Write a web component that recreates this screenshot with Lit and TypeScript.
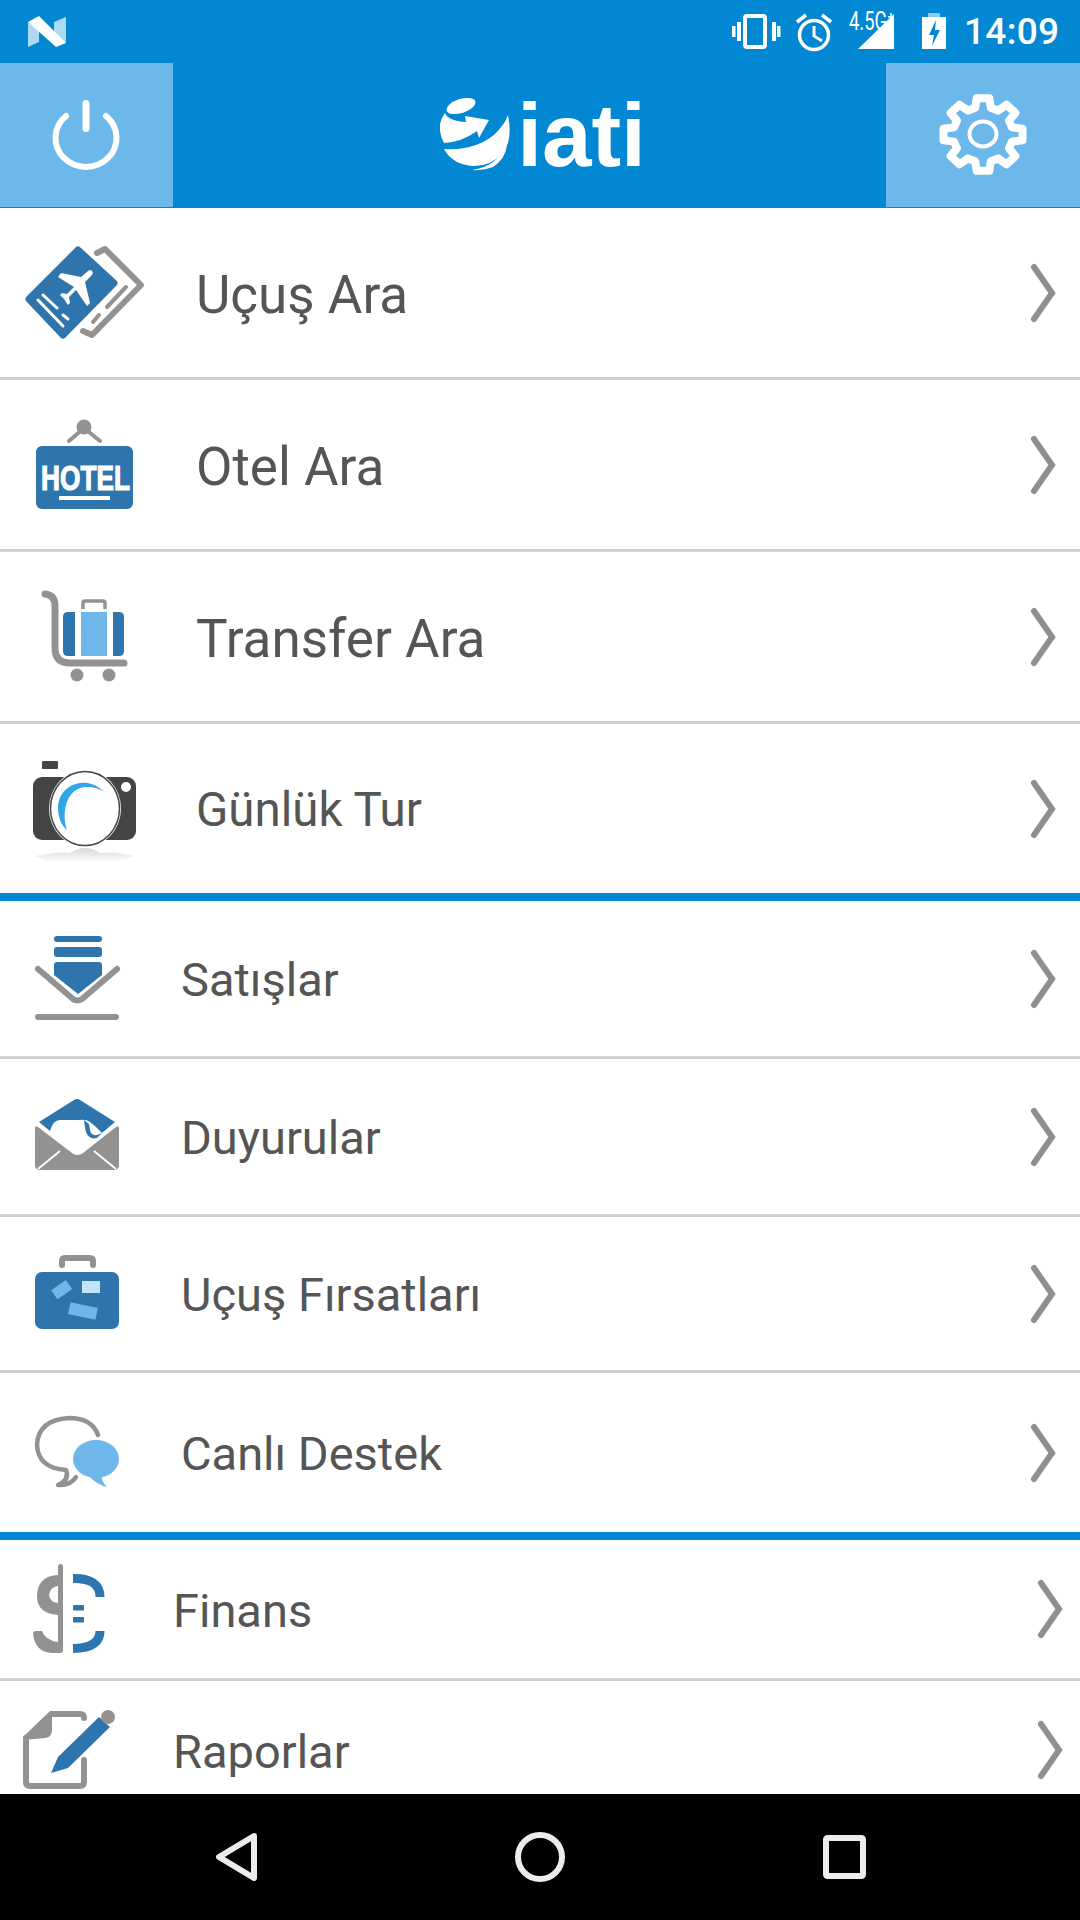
import { LitElement, html, css, svg } from 'lit'
import { customElement } from 'lit/decorators.js'

const BLUE = '#2e75ad'
const GRAY = '#929292'
const LIGHT = '#6db7ea'

// icons are authored in page coordinates, each row's viewBox crops to its own band
const ticket = svg`
  <path d="M78 250 L114 283 L63 335 L29 299Z" fill=${BLUE} stroke=${BLUE} stroke-width="7" stroke-linejoin="round"/>
  <path d="M97 253 L105 249 L141 285 L92 335 L83 331" fill="none" stroke=${GRAY} stroke-width="6" stroke-linejoin="round" stroke-linecap="round"/>
  <path d="M107 307 L126 287 M93 322 L99 315" stroke=${GRAY} stroke-width="4" stroke-linecap="round"/>
  <path d="M38 300 L63 326 M43 295 L57 308 M63 315 L68 319" stroke="#fff" stroke-width="3" stroke-linecap="round"/>
  <path d="M92 271 Q94 273 91 276 L85 282 L90 303 L87 306 L76 290 L69 297 L70 303 L68 305 L64 299 L60 295 L62 293 L67 294 L74 287 L58 277 L61 273 L81 277 L88 271 Q90 269 92 271Z" fill="#fff"/>
`

const hotel = svg`
  <circle cx="84" cy="427" r="7.5" fill=${GRAY}/>
  <path d="M69 441 L84 428 L100 441" fill="none" stroke=${GRAY} stroke-width="4" stroke-linecap="round"/>
  <rect x="36" y="446" width="97" height="63" rx="6" fill=${BLUE}/>
  <text x="41" y="490" textLength="89" lengthAdjust="spacingAndGlyphs" font-family="Liberation Sans" font-weight="700" font-size="35" fill="#fff" stroke="#fff" stroke-width="1.2">HOTEL</text>
  <rect x="59" y="496" width="51" height="4" fill="#fff"/>
`

const cart = svg`
  <path d="M45 594 Q55 595 55 606 L55 648 Q55 663 70 663 L124 663" fill="none" stroke=${GRAY} stroke-width="7" stroke-linecap="round"/>
  <circle cx="77" cy="675" r="6.5" fill=${GRAY}/>
  <circle cx="109" cy="675" r="6.5" fill=${GRAY}/>
  <path d="M83 609 L83 603 Q83 601 85 601 L103 601 Q105 601 105 603 L105 609" fill="none" stroke=${GRAY} stroke-width="3.5"/>
  <path d="M75 612 L75 656 L68 656 Q63 656 63 651 L63 617 Q63 612 68 612Z" fill=${BLUE}/>
  <rect x="81" y="612" width="26" height="44" fill=${LIGHT}/>
  <path d="M113 612 L113 656 L119 656 Q124 656 124 651 L124 617 Q124 612 119 612Z" fill=${BLUE}/>
`

const camera = svg`
  <defs>
    <linearGradient id="shine" x1="0" y1="0" x2="0" y2="1">
      <stop offset="0" stop-color="#d8d8d8"/>
      <stop offset="1" stop-color="#fff"/>
    </linearGradient>
  </defs>
  <path d="M35 856 Q60 851 70 853 Q85 843 100 853 Q115 851 134 856 L120 862 L50 862Z" fill="url(#shine)"/>
  <rect x="42" y="761" width="16" height="8" rx="1" fill="#444"/>
  <rect x="33" y="777" width="103" height="63" rx="9" fill="#444"/>
  <ellipse cx="85" cy="808.500" rx="36" ry="38.500" fill="#fff"/>
  <ellipse cx="85" cy="808.500" rx="34.500" ry="37" fill="#fff" stroke="#444" stroke-width="1.5"/>
  <circle cx="126" cy="787" r="5" fill="#fff"/>
  <path d="M105 792 C95 784 88 782 80 783 C66 785 58 796 58 808 C58 817 61 825 67 830 C64 822 64 812 66 805 C69 793 78 786 88 787 C94 787 100 789 105 792Z" fill="#2ea6e8"/>
`

const sales = svg`
  <rect x="54" y="936" width="48" height="6" rx="3" fill=${BLUE}/>
  <rect x="54" y="947" width="48" height="10" rx="3" fill=${BLUE}/>
  <path d="M57 962 L99 962 Q102 962 102 965 L102 975 L78 994 L54 975 L54 965 Q54 962 57 962Z" fill=${BLUE}/>
  <path d="M38 969 L73 999 Q77 1002 82 999 L117 969" fill="none" stroke=${GRAY} stroke-width="6" stroke-linecap="round"/>
  <rect x="35" y="1014" width="84" height="6" rx="3" fill=${GRAY}/>
`

const mail = svg`
  <path d="M39 1122 L74 1100 Q77 1098 80 1100 L115 1122 L102 1133 L96 1127 L90 1122 Q86 1119 80 1120 L60 1120 Q53 1120 50 1131Z" fill=${BLUE}/>
  <path d="M84 1120 Q85 1128 86 1132 Q89 1140 97 1138 L102 1133 L97 1135 Q91 1136 90 1130 L89 1124Z" fill=${BLUE}/>
  <path d="M35 1128 Q35 1125 38 1127 L72 1153 Q77 1157 83 1153 L116 1127 Q119 1125 119 1128 L119 1165 Q119 1170 114 1170 L40 1170 Q35 1170 35 1165Z" fill=${GRAY}/>
  <path d="M38 1169 L60 1151 M116 1169 L94 1151" stroke="#fff" stroke-width="2"/>
`

const suitcase = svg`
  <path d="M62 1265 L62 1261 Q62 1258 65 1258 L90 1258 Q93 1258 93 1261 L93 1265" fill="none" stroke=${GRAY} stroke-width="6" stroke-linecap="round"/>
  <rect x="35" y="1272" width="84" height="57" rx="7" fill=${BLUE}/>
  <rect x="53" y="1284" width="18" height="11" transform="rotate(-35 62 1290)" fill=${LIGHT}/>
  <rect x="82" y="1281" width="18" height="12" fill="#c5e3f8"/>
  <rect x="69" y="1305" width="28" height="12" transform="rotate(12 83 1311)" fill=${LIGHT}/>
`

const chat = svg`
  <path d="M98 1435 Q92 1418 69 1418 Q38 1420 37 1445 Q38 1468 66 1470 Q70 1480 58 1485 Q70 1486 76 1477" fill="none" stroke=${GRAY} stroke-width="4.5" stroke-linecap="round" stroke-linejoin="round"/>
  <ellipse cx="96" cy="1459" rx="23" ry="19" fill=${LIGHT}/>
  <path d="M88 1475 Q97 1485 107 1487 Q100 1480 102 1474Z" fill=${LIGHT}/>
`

const finance = svg`
  <path d="M58 1566 Q58 1564 60.500 1564 Q63 1564 63 1566 L63 1650 Q63 1653 60 1653 L52 1653 Q35 1652 33 1634 Q33 1631 36 1631 L42 1631 Q45 1640 58 1642Z" fill=${GRAY}/>
  <path d="M58 1575 Q37 1576 37 1597 Q37 1613 58 1615 L58 1603 Q50 1602 49 1595 Q50 1587 58 1586Z" fill=${GRAY}/>
  <path d="M73 1578.500 Q100 1578 100 1597" fill="none" stroke=${BLUE} stroke-width="9"/>
  <path d="M73 1648.500 Q100 1648 100 1631" fill="none" stroke=${BLUE} stroke-width="9"/>
  <rect x="73" y="1605" width="11" height="5.500" rx="1" fill=${BLUE}/>
  <rect x="73" y="1617" width="11" height="5.500" rx="1" fill=${BLUE}/>
`

const report = svg`
  <path d="M52 1714 L80 1714 Q84 1714 84 1718 M84 1760 L84 1782 Q84 1786 80 1786 L30 1786 Q26 1786 26 1782 L26 1738" fill="none" stroke=${GRAY} stroke-width="6" stroke-linecap="round"/>
  <path d="M52 1711 L50 1711 L23 1737 L23 1740 L45 1738 Q52 1737 52 1730Z" fill=${GRAY}/>
  <path d="M51 1773 L58 1757 L99 1717 L110 1727 L68 1768Z" fill=${BLUE} stroke="#fff" stroke-width="2" paint-order="stroke"/>
  <circle cx="108" cy="1717" r="7" fill=${GRAY}/>
`

type Row = { label: string; top: number; height: number; icon: unknown; size?: string }

const groupOne: Row[] = [
  { label: 'Uçuş Ara', top: 208, height: 169, icon: ticket, size: 'big' },
  { label: 'Otel Ara', top: 380, height: 169, icon: hotel, size: 'big' },
  { label: 'Transfer Ara', top: 552, height: 169, icon: cart, size: 'big' },
  { label: 'Günlük Tur', top: 724, height: 169, icon: camera, size: 'mid' },
]

const groupTwo: Row[] = [
  { label: 'Satışlar', top: 901, height: 155, icon: sales },
  { label: 'Duyurular', top: 1059, height: 155, icon: mail },
  { label: 'Uçuş Fırsatları', top: 1217, height: 153, icon: suitcase },
  { label: 'Canlı Destek', top: 1373, height: 159, icon: chat },
]

const groupThree: Row[] = [
  { label: 'Finans', top: 1540, height: 138, icon: finance },
  { label: 'Raporlar', top: 1681, height: 138, icon: report },
]

// the reference gear is a little squashed vertically
function gearPoints() {
  const cx = 983
  const cy = 134.5
  const pts: string[] = []
  for (let i = 0; i < 8; i++) {
    const a = (i * Math.PI) / 4 - Math.PI / 2
    const at = (r: number, d: number) => {
      const t = a + (d * Math.PI) / 180
      return `${(cx + r * Math.cos(t)).toFixed(1)},${(cy + r * 0.92 * Math.sin(t)).toFixed(1)}`
    }
    pts.push(at(30, -15), at(40, -9), at(40, 9), at(30, 15))
  }
  return pts.join(' ')
}

@customElement('app-root')
export class AppRoot extends LitElement {
  static styles = css`
    :host {
      display: flex;
      flex-direction: column;
      width: 1080px;
      height: 1920px;
      overflow: hidden;
      background: #fff;
      font-family: Roboto, 'Liberation Sans', sans-serif;
    }

    svg {
      display: block;
      flex: none;
    }

    .status {
      display: flex;
      align-items: center;
      justify-content: space-between;
      height: 63px;
      background: #0288d3;
    }

    .status-right {
      display: flex;
      align-items: center;
    }

    .time {
      width: 116px;
      color: #fff;
      font-size: 37px;
      font-weight: 500;
      line-height: 63px;
      letter-spacing: 0.3px;
    }

    .header {
      display: flex;
      height: 145px;
      background: #0288d3;
    }

    .square {
      height: 144px;
      background: #6db8eb;
    }

    .logo {
      flex: 1;
      display: flex;
      align-items: center;
      justify-content: center;
      gap: 3px;
      padding-left: 25px;
    }

    .logo-text {
      color: #fff;
      font-family: 'Liberation Sans', sans-serif;
      font-size: 89px;
      font-weight: 700;
      line-height: 1;
    }

    .list {
      flex: 1;
      min-height: 0;
      overflow: hidden;
    }

    .row {
      display: flex;
      align-items: center;
      color: #555;
      font-size: 47px;
      border-bottom: 3px solid #cfcfcf;
    }

    .row.last {
      border-bottom: none;
    }

    .row.big {
      font-size: 53px;
    }

    .row.mid {
      font-size: 47.5px;
    }

    .label {
      flex: 1;
      padding-top: 2px;
      white-space: nowrap;
    }

    .big .label {
      padding-top: 4px;
    }

    .chevron {
      margin-right: 23px;
    }

    .chevron.outer {
      margin-right: 16px;
    }

    .rule {
      height: 8px;
      background: #0288d3;
    }

    .nav {
      flex: none;
      height: 126px;
      background: #000;
    }
  `

  private _row(row: Row, width: number, last: boolean, outer = false) {
    return html`
      <div class="row ${row.size ?? ''} ${last ? 'last' : ''}">
        <svg width=${width} height=${row.height} viewBox="0 ${row.top} ${width} ${row.height}">${row.icon}</svg>
        <span class="label">${row.label}</span>
        <svg class="chevron ${outer ? 'outer' : ''}" width="30" height="68" viewBox="0 0 30 68">
          <path d="M7 8 L25 34 L7 60" fill="none" stroke="#8f8f8f" stroke-width="6" stroke-linecap="round" stroke-linejoin="miter"/>
        </svg>
      </div>
    `
  }

  private _statusBar() {
    return html`
      <div class="status">
        <svg width="80" height="63" viewBox="0 0 80 63">
          <path d="M28 22 L39 30 L39 42 L28 47Z M66 17 L54 22 L54 33 L66 43Z" fill="#fff" opacity="0.68"/>
          <path d="M28 22 L39 16 L66 43 L56 47Z" fill="#fff"/>
        </svg>
        <div class="status-right">
          <svg width="234" height="63" viewBox="730 0 234 63">
            <rect x="745" y="16" width="20" height="31" rx="2" fill="none" stroke="#fff" stroke-width="4"/>
            <path d="M732 26 h3.500 v11 h-3.500Z M737 22 h4 v19 h-4Z M772 22 h4 v19 h-4Z M777 26 h3.500 v11 h-3.500Z" fill="#fff"/>
            <circle cx="814" cy="35" r="14.500" fill="none" stroke="#fff" stroke-width="3.500"/>
            <path d="M814 26 L814 36 L822 41" fill="none" stroke="#fff" stroke-width="3"/>
            <path d="M797 22 L806 15 M822 15 L831 22" stroke="#fff" stroke-width="3.500"/>
            <path d="M858 49 L894 49 L894 14Z" fill="#fff"/>
            <text x="849" y="30" textLength="38" lengthAdjust="spacingAndGlyphs" font-family="Roboto" font-size="25" fill="#fff">4.5G</text>
            <path d="M888 17 h6 M891 13 v8" stroke="#fff" stroke-width="1.500"/>
            <rect x="928" y="13" width="12" height="5" fill="#fff" opacity="0.55"/>
            <path fill-rule="evenodd" d="M922 17 L946 17 L946 49 L922 49Z M936 20 L929 35 L934 35 L932 46 L940 30 L935 30Z" fill="#fff"/>
          </svg>
          <span class="time">14:09</span>
        </div>
      </div>
    `
  }

  private _header() {
    return html`
      <div class="header">
        <svg class="square" width="173" height="144" viewBox="0 63 173 144">
          <path d="M66 116 A30.500 29 0 1 0 106 116" fill="none" stroke="#fff" stroke-width="6" stroke-linecap="round"/>
          <path d="M86 103.500 L86 128.500" stroke="#fff" stroke-width="7" stroke-linecap="round"/>
        </svg>
        <div class="logo">
          <svg width="76" height="80" viewBox="438 97 76 80">
            <ellipse cx="461" cy="107" rx="15" ry="7" transform="rotate(-18 461 107)" fill="#fff"/>
            <path d="M440 125 Q441 119 445 114 Q448 122 466 123 L465 117 L489 121 L479 139 L477 132 Q462 143 444 144 Q439 135 440 125Z" fill="#fff"/>
            <path d="M444 150 Q475 152 495 135 Q505 125 508 116 Q513 140 503 154 Q490 168 472 167 Q452 165 444 150Z" fill="#fff"/>
            <path d="M472 171 Q495 168 507 147 Q505 160 493 168 Q483 172 472 171Z" fill="#fff"/>
          </svg>
          <span class="logo-text">iati</span>
        </div>
        <svg class="square" width="194" height="144" viewBox="886 63 194 144">
          <polygon points=${gearPoints()} fill="none" stroke="#fff" stroke-width="8" stroke-linejoin="round"/>
          <ellipse cx="983" cy="134" rx="13.500" ry="12.500" fill="none" stroke="#fff" stroke-width="4"/>
        </svg>
      </div>
    `
  }

  render() {
    return html`
      ${this._statusBar()}
      ${this._header()}
      <div class="list">
        ${groupOne.map((r, i) => this._row(r, 196, i === 3))}
        <div class="rule"></div>
        ${groupTwo.map((r, i) => this._row(r, 181, i === 3))}
        <div class="rule"></div>
        ${groupThree.map((r, i) => this._row(r, 173, i === 1, true))}
      </div>
      <div class="nav">
        <svg width="1080" height="126" viewBox="0 1794 1080 126">
          <path d="M254 1836 L219 1857 L254 1878Z" fill="none" stroke="#ececec" stroke-width="6" stroke-linejoin="round"/>
          <circle cx="540" cy="1857" r="22" fill="none" stroke="#ececec" stroke-width="6"/>
          <rect x="826" y="1838" width="37" height="38" rx="1.500" fill="none" stroke="#ececec" stroke-width="6"/>
        </svg>
      </div>
    `
  }
}
